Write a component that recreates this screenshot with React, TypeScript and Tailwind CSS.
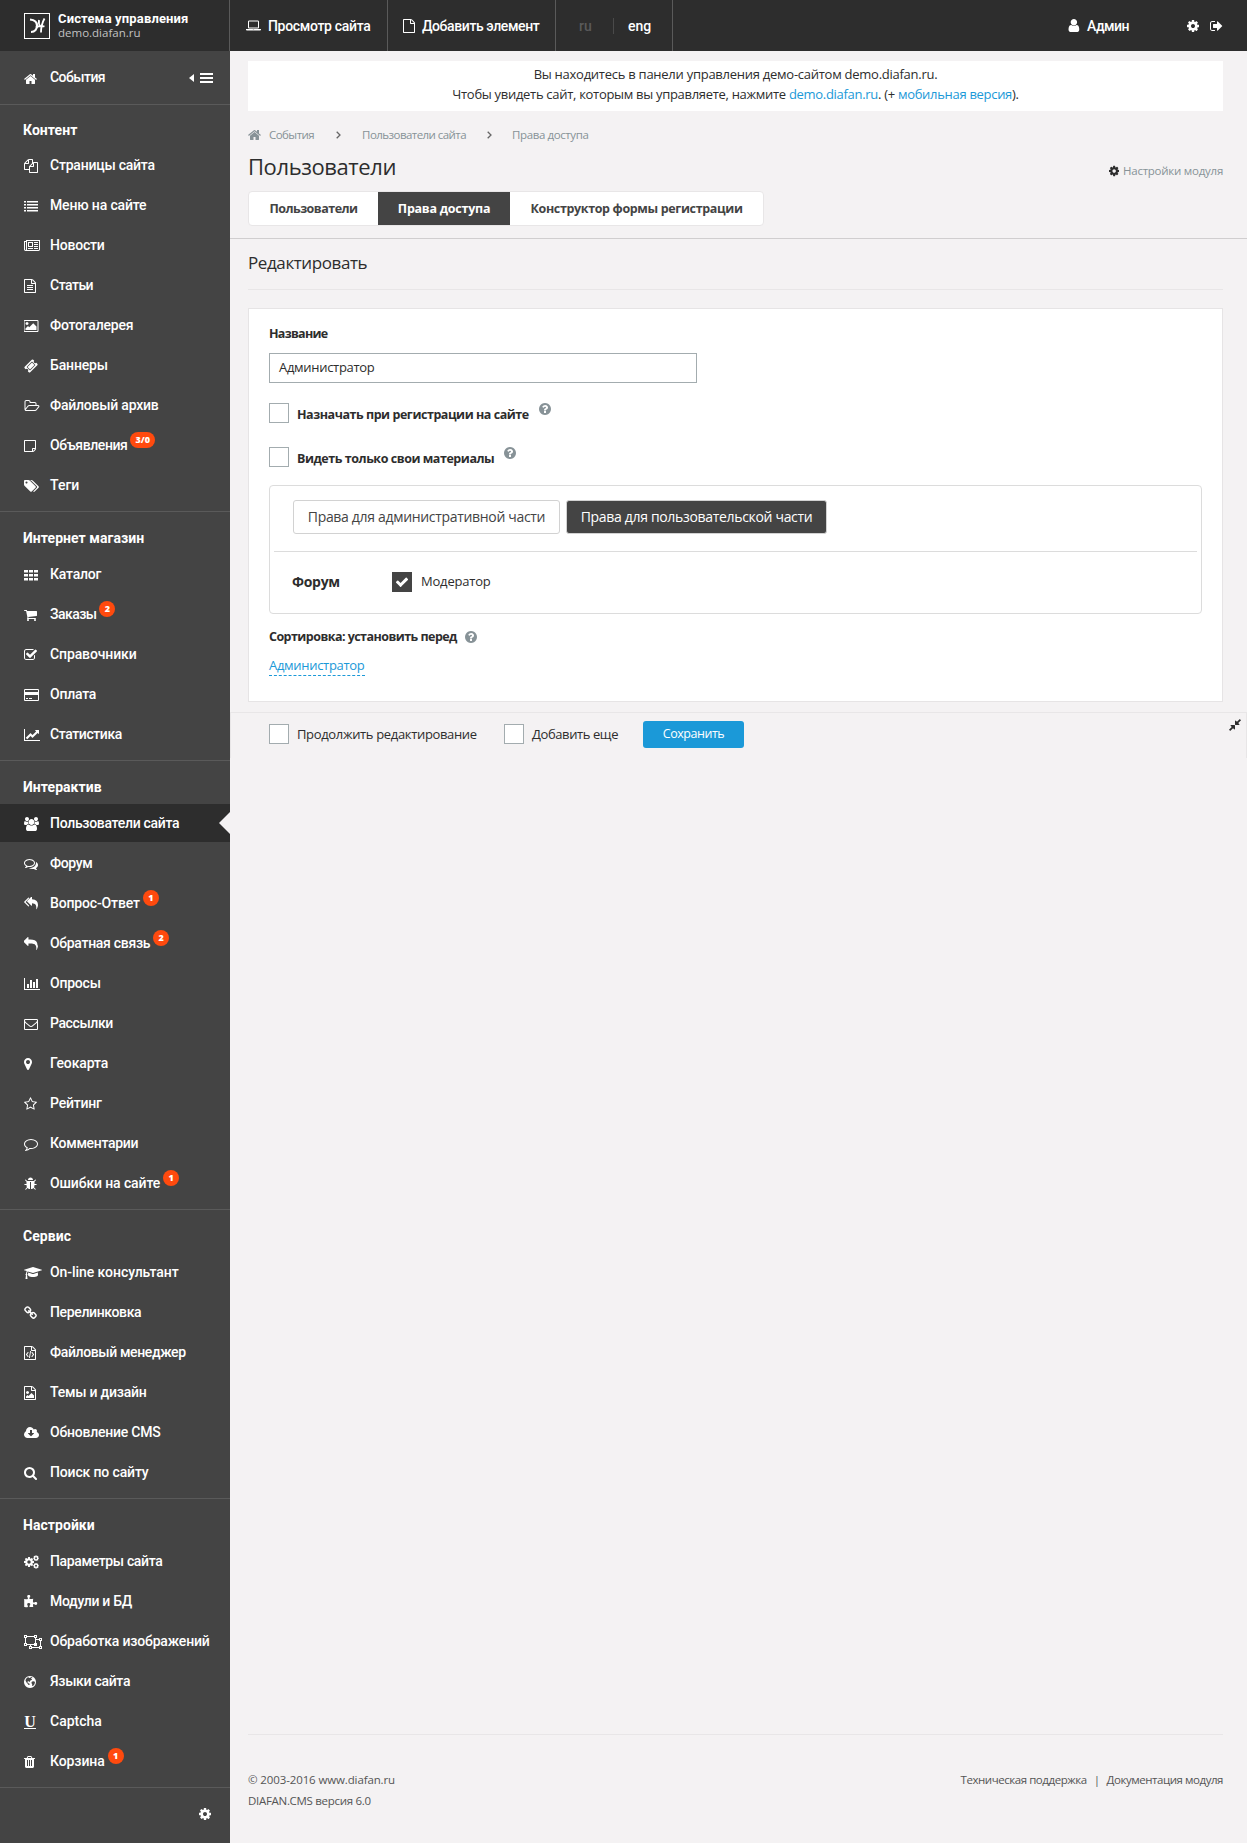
import { ReactNode } from 'react';

type IconDef = { x?: number; w?: number; d: string };

const FILE =
  'M1596 380q28 28 48 76t20 88v1152q0 40-28 68t-68 28h-1344q-40 0-68-28t-28-68v-1600q0-40 28-68t68-28h896q40 0 88 20t76 48zm-444-244v376h376q-10-29-22-41l-313-313q-12-12-41-22zm384 1528v-1024h-416q-40 0-68-28t-28-68v-416h-768v1536h1280z';
const COG =
  'M1152 896q0-106-75-181t-181-75-181 75-75 181 75 181 181 75 181-75 75-181zm512-109v222q0 12-8 23t-20 13l-185 28q-19 54-39 91 35 50 107 138 10 12 10 25t-9 23q-27 37-99 108t-94 71q-12 0-26-9l-138-108q-44 23-91 38-16 136-29 186-7 28-36 28h-222q-14 0-24.5-8.5t-11.5-21.5l-28-184q-49-16-90-37l-141 107q-10 9-25 9-14 0-25-11-126-114-165-168-7-10-7-23 0-12 8-23 15-21 51-66.5t54-70.5q-27-50-41-99l-183-27q-13-2-21-12.5t-8-23.5v-222q0-12 8-23t19-13l186-28q14-46 39-92-40-57-107-138-10-12-10-24 0-10 9-23 26-36 98.5-107.5t94.5-71.5q13 0 26 10l138 107q44-23 91-38 16-136 29-186 7-28 36-28h222q14 0 24.5 8.5t11.5 21.5l28 184q49 16 90 37l142-107q9-9 24-9 13 0 25 10 129 119 165 170 7 8 7 22 0 12-8 23-15 21-51 66.5t-54 70.5q26 50 41 98l183 28q13 2 21 12.5t8 23.5z';

const ICONS: Record<string, IconDef> = {
  home: { x: 64, w: 1664, d: 'M1472 992v480q0 26-19 45t-45 19h-384v-384h-256v384h-384q-26 0-45-19t-19-45v-480q0-1 .5-3t.5-3l575-474 575 474q1 2 1 6zm223-69l-62 74q-8 9-21 11h-3q-13 0-21-7l-692-577-692 577q-12 8-24 7-13-2-21-11l-62-74q-8-10-7-23.5t11-21.5l719-599q32-26 76-26t76 26l244 204v-195q0-14 9-23t23-9h192q14 0 23 9t9 23v408l219 182q10 8 11 21.5t-7 23.5z' },
  cog: { x: 128, w: 1536, d: COG },
  user: { x: 192, w: 1408, d: 'M1536 1399q0 109-62.5 187t-150.5 78h-854q-88 0-150.5-78t-62.5-187q0-85 8.5-160.5t31.5-152 58.5-131 94-89 134.5-34.5q131 128 313 128t313-128q76 0 134.5 34.5t94 89 58.5 131 31.5 152 8.5 160.5zm-256-887q0 159-112.5 271.5t-271.5 112.5-271.5-112.5-112.5-271.5 112.5-271.5 271.5-112.5 271.5 112.5 112.5 271.5z' },
  signOut: { x: 64, w: 1664, d: 'M704 1440q0 4 1 20t.5 26.5-3 23.5-10 19.5-20.5 6.5h-320q-119 0-203.5-84.5t-84.5-203.5v-704q0-119 84.5-203.5t203.5-84.5h320q13 0 22.5 9.5t9.5 22.5q0 4 1 20t.5 26.5-3 23.5-10 19.5-20.5 6.5h-320q-66 0-113 47t-47 113v704q0 66 47 113t113 47h312l11.5 1 11.5 3 8 5.5 7 9 2 13.5zm928-544q0 26-19 45l-544 544q-19 19-45 19t-45-19-19-45v-288h-448q-26 0-45-19t-19-45v-384q0-26 19-45t45-19h448v-288q0-26 19-45t45-19 45 19l544 544q19 19 19 45z' },
  laptop: { w: 1920, d: 'M416 1216q-66 0-113-47t-47-113v-704q0-66 47-113t113-47h1088q66 0 113 47t47 113v704q0 66-47 113t-113 47h-1088zm-32-864v704q0 13 9.5 22.5t22.5 9.5h1088q13 0 22.5-9.5t9.5-22.5v-704q0-13-9.5-22.5t-22.5-9.5h-1088q-13 0-22.5 9.5t-9.5 22.5zm1376 928h160v96q0 40-47 68t-113 28h-1600q-66 0-113-28t-47-68v-96h1760zm-720 96q16 0 16-16t-16-16h-160q-16 0-16 16t16 16h160z' },
  file: { x: 128, w: 1536, d: FILE },
  fileText: { x: 128, w: 1536, d: FILE + 'm-1024-864q0-14 9-23t23-9h704q14 0 23 9t9 23v64q0 14-9 23t-23 9h-704q-14 0-23-9t-9-23v-64zm736 224q14 0 23 9t9 23v64q0 14-9 23t-23 9h-704q-14 0-23-9t-9-23v-64q0-14 9-23t23-9h704zm0 256q14 0 23 9t9 23v64q0 14-9 23t-23 9h-704q-14 0-23-9t-9-23v-64q0-14 9-23t23-9h704z' },
  fileCode: { x: 128, w: 1536, d: FILE + 'm-928-896q8-11 21-12.5t24 6.5l51 38q11 8 12.5 21t-6.5 24l-182 243 182 243q8 11 6.5 24t-12.5 21l-51 38q-11 8-24 6.5t-21-12.5l-226-301q-14-19 0-38zm802 301q14 19 0 38l-226 301q-8 11-21 12.5t-24-6.5l-51-38q-11-8-12.5-21t6.5-24l182-243-182-243q-8-11-6.5-24t12.5-21l51-38q11-8 24-6.5t21 12.5zm-620 461q-13-2-20.5-13t-5.5-24l138-831q2-13 13-20.5t24-5.5l63 10q13 2 20.5 13t5.5 24l-138 831q-2 13-13 20.5t-24 5.5z' },
  fileImage: { x: 128, w: 1536, d: FILE + 'm-128-448v320h-1024v-192l192-192 128 128 384-384zm-832-192q-80 0-136-56t-56-136 56-136 136-56 136 56 56 136-56 136-136 56z' },
  files: { d: 'M1696 384q40 0 68 28t28 68v1216q0 40-28 68t-68 28h-960q-40 0-68-28t-28-68v-288h-544q-40 0-68-28t-28-68v-672q0-40 20-88t48-76l408-408q28-28 76-48t88-20h416q40 0 68 28t28 68v328q68-40 128-40h416zm-544 213l-299 299h299v-299zm-640-384l-299 299h299v-299zm196 647l316-316v-416h-384v416q0 40-28 68t-68 28h-416v640h512v-256q0-40 20-88t48-76zm956 804v-1152h-384v416q0 40-28 68t-68 28h-416v640h896z' },
  list: { d: 'M0 256h256v192h-256zM384 256h1408v192h-1408zM0 640h256v192h-256zM384 640h1408v192h-1408zM0 1024h256v192h-256zM384 1024h1408v192h-1408zM0 1408h256v192h-256zM384 1408h1408v192h-1408z' },
  news: { w: 2048, d: 'M1024 512h-384v384h384zm128 640v128h-640v-128zm0-768v640h-640v-640zm640 768v128h-512v-128zm0-256v128h-512v-128zm0-256v128h-512v-128zm0-256v128h-512v-128zm-1536 960v-960h-128v960q0 26 19 45t45 19 45-19 19-45zm1664 0v-1088h-1536v1088q0 33-11 64h1483q26 0 45-19t19-45zm128-1216v1216q0 80-56 136t-136 56h-1664q-80 0-136-56t-56-136v-1088h256v-128z' },
  picture: { w: 1920, d: 'M576 576q0 80-56 136t-136 56-136-56-56-136 56-136 136-56 136 56 56 136zm1024 384v448h-1408v-192l320-320 160 160 512-512zm96-704h-1600q-13 0-22.5 9.5t-9.5 22.5v1216q0 13 9.5 22.5t22.5 9.5h1600q13 0 22.5-9.5t9.5-22.5v-1216q0-13-9.5-22.5t-22.5-9.5zm160 32v1216q0 66-47 113t-113 47h-1600q-66 0-113-47t-47-113v-1216q0-66 47-113t113-47h1600q66 0 113 47t47 113z' },
  ticket: { d: 'M1024 452l316 316-572 572-316-316zm-211 979l618-618q19-19 19-45t-19-45l-362-362q-18-18-45-18t-45 18l-618 618q-19 19-19 45t19 45l362 362q18 18 45 18t45-18zm889-637l-907 908q-37 37-90.5 37t-90.5-37l-126-126q56-56 56-136t-56-136-136-56-136 56l-125-126q-37-37-37-90.5t37-90.5l907-906q37-37 90.5-37t90.5 37l125 125q-56 56-56 136t56 136 136 56 136-56l126 125q37 37 37 90.5t-37 90.5z' },
  folder: { w: 1984, d: 'M1845 931q0-35-53-35h-1088q-40 0-85.5 21.5t-71.5 52.5l-294 363q-18 24-18 40 0 35 53 35h1088q40 0 86-22t71-53l294-363q18-22 18-39zm-1141-163h768v-160q0-40-28-68t-68-28h-576q-40 0-68-28t-28-68v-64q0-40-28-68t-68-28h-320q-40 0-68 28t-28 68v853l256-315q44-53 116-87.5t140-34.5zm1269 163q0 62-46 120l-295 363q-43 53-116 87.5t-140 34.5h-1088q-92 0-158-66t-66-158v-960q0-92 66-158t158-66h320q92 0 158 66t66 158v32h544q92 0 158 66t66 158v160h192q54 0 99 24.5t67 70.5q15 32 15 68z' },
  note: { w: 1536, d: 'M1400 1280h-248v248q29-10 41-22l185-185q12-12 22-41zm-280-128h288v-896h-1280v1280h896v-288q0-40 28-68t68-28zm416-928v1024q0 40-20 88t-48 76l-184 184q-28 28-76 48t-88 20h-1024q-40 0-68-28t-28-68v-1344q0-40 28-68t68-28h1344q40 0 68 28t28 68z' },
  tags: { w: 1920, d: 'M448 448q0-53-37.5-90.5t-90.5-37.5-90.5 37.5-37.5 90.5 37.5 90.5 90.5 37.5 90.5-37.5 37.5-90.5zm1067 576q0 53-37 90l-491 492q-39 37-91 37-53 0-90-37l-715-716q-38-37-64.5-101t-26.5-117v-416q0-52 38-90t90-38h416q53 0 117 26.5t102 64.5l715 714q37 39 37 91zm384 0q0 53-37 90l-491 492q-39 37-91 37-36 0-59-14t-53-45l470-470q37-37 37-90 0-52-37-91l-715-714q-38-38-102-64.5t-117-26.5h224q53 0 117 26.5t102 64.5l715 714q37 39 37 91z' },
  th: { d: 'M0 256h512v320h-512zM640 256h512v320h-512zM1280 256h512v320h-512zM0 768h512v320h-512zM640 768h512v320h-512zM1280 768h512v320h-512zM0 1280h512v320h-512zM640 1280h512v320h-512zM1280 1280h512v320h-512z' },
  cart: { x: 64, w: 1664, d: 'M704 1536q0 52-38 90t-90 38-90-38-38-90 38-90 90-38 90 38 38 90zm896 0q0 52-38 90t-90 38-90-38-38-90 38-90 90-38 90 38 38 90zm128-1088v512q0 24-16.5 42.5t-40.5 21.5l-1044 122q13 60 13 70 0 16-24 64h920q26 0 45 19t19 45-19 45-45 19h-1024q-26 0-45-19t-19-45q0-11 8-31.5t16-36 21.5-40 15.5-29.5l-177-823h-204q-26 0-45-19t-19-45 19-45 45-19h256q16 0 28.5 6.5t19.5 15.5 13 24.5 8 26 5.5 29.5 4.5 26h1201q26 0 45 19t19 45z' },
  checkSquare: { x: 64, w: 1664, d: 'M1472 930v318q0 119-84.5 203.5t-203.5 84.5h-832q-119 0-203.5-84.5t-84.5-203.5v-832q0-119 84.5-203.5t203.5-84.5h832q63 0 117 25 15 7 18 23 3 17-9 29l-49 49q-10 10-23 10-3 0-9-2-23-6-45-6h-832q-66 0-113 47t-47 113v832q0 66 47 113t113 47h832q66 0 113-47t47-113v-254q0-13 9-22l64-64q10-10 23-10 6 0 12 3 20 8 20 29zm231-489l-814 814q-24 24-57 24t-57-24l-430-430q-24-24-24-57t24-57l110-110q24-24 57-24t57 24l263 263 647-647q24-24 57-24t57 24l110 110q24 24 24 57t-24 57z' },
  card: { w: 1920, d: 'M1760 128q66 0 113 47t47 113v1216q0 66-47 113t-113 47h-1600q-66 0-113-47t-47-113v-1216q0-66 47-113t113-47zM128 256v256h1664v-256zM128 896v640h1664v-640zM256 1408v-128h256v128zM640 1408v-128h384v128z' },
  lineChart: { w: 2048, d: 'M2048 1536v128h-2048v-1536h128v1408h1920zm-128-1248v435q0 21-19.5 29.5t-35.5-7.5l-121-121-633 633q-10 10-23 10t-23-10l-233-233-416 416-192-192 585-585q10-10 23-10t23 10l233 233 464-464-121-121q-16-16-7.5-35.5t29.5-19.5h435q14 0 23 9t9 23z' },
  users: { w: 1920, d: 'M593 896q-162 5-265 128h-134q-82 0-138-40.5t-56-118.5q0-353 124-353 6 0 43.5 21t97.5 42.5 119 21.5q67 0 133-23-5 37-5 66 0 139 81 256zm1071 637q0 120-73 189.5t-194 69.5h-874q-121 0-194-69.5t-73-189.5q0-53 3.5-103.5t14-109 26.5-108.5 43-97.5 62-81 85.5-53.5 111.5-20q10 0 43 21.5t73 48 107 48 135 21.5 135-21.5 107-48 73-48 43-21.5q61 0 111.5 20t85.5 53.5 62 81 43 97.5 26.5 108.5 14 109 3.5 103.5zm-1024-1277q0 106-75 181t-181 75-181-75-75-181 75-181 181-75 181 75 75 181zm704 384q0 159-112.5 271.5t-271.5 112.5-271.5-112.5-112.5-271.5 112.5-271.5 271.5-112.5 271.5 112.5 112.5 271.5zm576 225q0 78-56 118.5t-138 40.5h-134q-103-123-265-128 81-117 81-256 0-29-5-66 66 23 133 23 59 0 119-21.5t97.5-42.5 43.5-21q124 0 124 353zm-128-609q0 106-75 181t-181 75-181-75-75-181 75-181 181-75 181 75 75 181z' },
  comments: { d: 'M704 384q-153 0-286 52t-211.5 141-78.5 191q0 82 53 158t149 132l97 56-35 84q34-20 62-39l44-31 53 10q78 14 153 14 153 0 286-52t211.5-141 78.5-191-78.5-191-211.5-141-286-52zm0-128q191 0 353.5 68.5t256.5 186.5 94 257-94 257-256.5 186.5-353.5 68.5q-86 0-176-16-124 88-278 128-36 9-86 16h-3q-11 0-20.5-8t-11.5-21q-1-3-1-6.5t.5-6.5 2-6l2.5-5 3.5-5.5 4-5 4.5-5 4-4.5q5-6 23-25t26-29.5 22.5-29 25-38.5 20.5-44q-124-72-195-177t-71-224q0-139 94-257t256.5-186.5 353.5-68.5zm822 1169q10 24 20.5 44t25 38.5 22.5 29 26 29.5 23 25q1 1 4 4.5t4.5 5 4 5 3.5 5.5l2.5 5 2 6 .5 6.5-1 6.5q-3 14-13 22t-22 7q-50-7-86-16-154-40-278-128-90 16-176 16-271 0-472-132 58 4 88 4 161 0 309-45t264-129q125-92 192-212t67-254q0-77-23-152 129 71 204 178t75 230q0 120-71 224.5t-195 176.5z' },
  replyAll: { d: 'M640 1082v70q0 42-39 59-13 5-25 5-27 0-45-19l-512-512q-19-19-19-45t19-45l512-512q29-31 70-14 39 17 39 59v69l-397 398q-19 19-19 45t19 45zm1152-58q0 58-17 133.5t-38.5 138-48 125-40.5 90.5l-20 40q-8 17-28 17-6 0-9-1-25-8-23-34 43-400-106-565-64-71-170.5-110.5t-267.5-52.5v251q0 42-39 59-13 5-25 5-27 0-45-19l-512-512q-19-19-19-45t19-45l512-512q29-31 70-14 39 17 39 59v262q411 28 599 221 169 173 169 509z' },
  reply: { d: 'M1792 1120q0 166-127 451-3 7-10.5 24t-13.5 30-13 22q-12 17-28 17-15 0-23.5-10t-8.5-25q0-9 2.5-26.5t2.5-23.5q5-68 5-123 0-112-19.5-200.5t-54-153.5-89-112-117-79-145.5-48.5-167-27-190.5-6.5h-224v256q0 26-19 45t-45 19-45-19l-512-512q-19-19-19-45t19-45l512-512q19-19 45-19t45 19 19 45v256h224q713 0 875 403 53 134 53 333z' },
  barChart: { w: 2048, d: 'M640 896v512h-256v-512zM1024 384v1024h-256v-1024zM2048 1536v128h-2048v-1536h128v1408zM1408 640v768h-256v-768zM1792 256v1152h-256v-1152z' },
  envelope: { d: 'M1664 1504v-768q-32 36-69 66-268 206-426 338-51 43-83 67t-86.5 48.5-102.5 24.5h-2q-48 0-102.5-24.5t-86.5-48.5-83-67q-158-132-426-338-37-30-69-66v768q0 13 9.5 22.5t22.5 9.5h1472q13 0 22.5-9.5t9.5-22.5zm0-1051v-24.5l-.5-13-3-12.5-5.5-9-9-7.5-14-2.5h-1472q-13 0-22.5 9.5t-9.5 22.5q0 168 147 284 193 152 401 317 6 5 35 29.5t46 37.5 44.5 31.5 50.5 27.5 43 9h2q20 0 43-9t50.5-27.5 44.5-31.5 46-37.5 35-29.5q208-165 401-317 54-43 100.5-115.5t46.5-131.5zm128-37v1088q0 66-47 113t-113 47h-1472q-66 0-113-47t-47-113v-1088q0-66 47-113t113-47h1472q66 0 113 47t47 113z' },
  marker: { x: 384, w: 1024, d: 'M1152 640q0-106-75-181t-181-75-181 75-75 181 75 181 181 75 181-75 75-181zm256 0q0 109-33 179l-364 774q-16 33-47.5 52t-67.5 19-67.5-19-46.5-52l-365-774q-33-70-33-179 0-212 150-362t362-150 362 150 150 362z' },
  star: { x: 64, w: 1664, d: 'M1201 1004l306-297-422-62-189-382-189 382-422 62 306 297-73 421 378-199 377 199zm527-357q0 22-26 48l-363 354 86 500q1 7 1 20 0 50-41 50-19 0-40-12l-449-236-449 236q-22 12-40 12-21 0-31.5-14.5t-10.5-35.5q0-6 2-20l86-500-364-354q-25-27-25-48 0-37 56-46l502-73 225-455q19-41 49-41t49 41l225 455 502 73q56 9 56 46z' },
  comment: { d: 'M896 384q-204 0-381.5 69.5t-282 187.5-104.5 255q0 112 71.5 213.5t201.5 175.5l87 50-27 96q-24 91-70 172 152-63 275-171l43-38 57 6q69 8 130 8 204 0 381.5-69.5t282-187.5 104.5-255-104.5-255-282-187.5-381.5-69.5zm896 512q0 174-120 321.5t-326 233-450 85.5q-70 0-145-8-198 175-460 242-49 14-114 22h-5q-15 0-27-10.5t-16-27.5v-1q-3-4-.5-12t2-10 4.5-9.5l6-9 7-8.5 8-9q7-8 31-34.5t34.5-38 31-39.5 32.5-51 27-59 26-76q-157-89-247.5-220t-90.5-281q0-130 71-248.5t191-204.5 286-136.5 348-50.5 348 50.5 286 136.5 191 204.5 71 248.5z' },
  bug: { x: 64, w: 1664, d: 'M1696 960q0 26-19 45t-45 19h-224q0 171-67 290l208 209q19 19 19 45t-19 45q-18 19-45 19t-45-19l-198-197q-5 5-15 13t-42 28.5-65 36.5-82 29-97 13v-896h-128v896q-51 0-101.5-13.5t-87-33-66-39-43.5-32.5l-15-14-183 207q-20 21-48 21-24 0-43-16-19-18-20.5-44.5t15.5-46.5l202-227q-58-114-58-274h-224q-26 0-45-19t-19-45 19-45 45-19h224v-294l-173-173q-19-19-19-45t19-45 45-19 45 19l173 173h844l173-173q19-19 45-19t45 19 19 45-19 45l-173 173v294h224q26 0 45 19t19 45zm-480-576h-640q0-133 93.5-226.5t226.5-93.5 226.5 93.5 93.5 226.5z' },
  cap: { w: 2304, d: 'M1774 836l18 316q4 69-82 128t-235 93.5-323 34.5-323-34.5-235-93.5-82-128l18-316 574 181q22 7 48 7t48-7zm530-324q0 23-22 31l-1120 352q-4 1-10 1t-10-1l-652-206q-43 34-71 111.5t-34 178.5q63 36 63 109 0 69-58 107l58 433q2 14-8 25-9 11-24 11h-192q-15 0-24-11-10-11-8-25l58-433q-58-38-58-107 0-73 65-111 11-207 98-330l-333-104q-22-8-22-31t22-31l1120-352q4-1 10-1t10 1l1120 352q22 8 22 31z' },
  link: { x: 64, w: 1664, d: 'M1520 1216q0-40-28-68l-208-208q-28-28-68-28-42 0-72 32 3 3 19 18.5t21.5 21.5 15 19 13 25.5 3.5 27.5q0 40-28 68t-68 28q-15 0-27.5-3.5t-25.5-13-19-15-21.5-21.5-18.5-19q-33 31-33 73 0 40 28 68l206 207q27 27 68 27 40 0 68-26l147-146q28-28 28-67zm-703-705q0-40-28-68l-206-207q-28-28-68-28-39 0-68 27l-147 146q-28 28-28 67 0 40 28 68l208 208q27 27 68 27 42 0 72-31-3-3-19-18.5t-21.5-21.5-15-19-13-25.5-3.5-27.5q0-40 28-68t68-28q15 0 27.5 3.5t25.5 13 19 15 21.5 21.5 18.5 19q33-31 33-73zm895 705q0 120-85 203l-147 146q-83 83-203 83-121 0-204-85l-206-207q-83-83-83-203 0-123 88-209l-88-88q-86 88-208 88-120 0-204-84l-208-208q-84-84-84-204t85-203l147-146q83-83 203-83 121 0 204 85l206 207q83 83 83 203 0 123-88 209l88 88q86-88 208-88 120 0 204 84l208 208q84 84 84 204z' },
  cloud: { w: 1920, d: 'M1280 928q0-14-9-23t-23-9h-224v-352q0-13-9.5-22.5t-22.5-9.5h-192q-13 0-22.5 9.5t-9.5 22.5v352h-224q-13 0-22.5 9.5t-9.5 22.5q0 14 9 23l352 352q9 9 23 9t23-9l351-351q10-12 10-24zm640 224q0 159-112.5 271.5t-271.5 112.5h-1088q-185 0-316.5-131.5t-131.5-316.5q0-130 70-240t188-165q-2-30-2-43 0-212 150-362t362-150q156 0 285.5 87t188.5 231q71-62 166-62 106 0 181 75t75 181q0 76-41 138 130 31 213.5 135.5t83.5 238.5z' },
  search: { x: 64, w: 1664, d: 'M1216 832q0-185-131.5-316.5t-316.5-131.5-316.5 131.5-131.5 316.5 131.5 316.5 316.5 131.5 316.5-131.5 131.5-316.5zm512 832q0 52-38 90t-90 38q-54 0-90-38l-343-342q-179 124-399 124-143 0-273.5-55.5t-225-150-150-225-55.5-273.5 55.5-273.5 150-225 225-150 273.5-55.5 273.5 55.5 225 150 150 225 55.5 273.5q0 220-124 399l343 343q37 37 37 90z' },
  puzzle: { x: 64, w: 1728, d: 'M1755 1083q0 81-44.5 135t-123.5 54q-41 0-77.5-17.5t-59-38-56.5-38-71-17.5q-110 0-110 124 0 39 16 115t15 115v5q-22 0-33 1-34 3-97.5 11.5t-115.5 13.5-98 5q-61 0-103-26.5t-42-83.5q0-37 17.5-71t38-56.5 38-59 17.5-77.5q0-79-54-123.5t-135-44.5q-84 0-143 45.5t-59 127.5q0 43 15 83t33.5 64.5 33.5 53 15 50.5q0 45-46 89-37 35-117 35-95 0-245-24-9-2-27.5-4t-27.5-4l-13-2q-1 0-3-1-2 0-2-1v-1024q2 1 17.5 3.5t34 5 21.5 3.5q150 24 245 24 80 0 117-35 46-44 46-89 0-22-15-50.5t-33.5-53-33.5-64.5-15-83q0-82 59-127.5t144-45.5q80 0 134 44.5t54 123.5q0 41-17.5 77.5t-38 59-38 56.5-17.5 71q0 57 42 83.5t103 26.5q64 0 180-15t163-17v2q-1 2-3.5 17.5t-5 34-3.5 21.5q-24 150-24 245 0 80 35 117 44 46 89 46 22 0 50.5-15t53-33.5 64.5-33.5 83-15q82 0 127.5 59t45.5 143z' },
  group: { w: 2304, d: 'M2304 768h-128v640h128v384h-384v-128h-896v128h-384v-384h128v-128h-384v128h-384v-384h128v-640h-128v-384h384v128h896v-128h384v384h-128v128h384v-128h384zM2048 512v128h128v-128zM1408 128v128h128v-128zM128 128v128h128v-128zM256 1280v-128h-128v128zM1280 1152v-128h128v-640h-128v-128h-896v128h-128v640h128v128zM896 1664v-128h-128v128zM2176 1664v-128h-128v128zM2048 1408v-640h-128v-128h-384v384h128v384h-384v-128h-384v128h128v128h896v-128z' },
  globe: { x: 128, w: 1536, d: 'M896 128a768 768 0 1 0 .1 0zM1050 250l130 60 20 90-120-20-60 110 150 40-70 110-150 60-90 130 60 110-90-40-80-100-170 30-20 130 110 20 60 110 130 30-40 150-110 10-110-160-170-190-110-230 60-190 180-190 150-20 70 80 140-20zM1280 800l190 20 60 110-60 240-190 240-120-30 20-190-110-180 60-150z' },
  trash: { x: 192, w: 1408, d: 'M704 1376v-704q0-14-9-23t-23-9h-64q-14 0-23 9t-9 23v704q0 14 9 23t23 9h64q14 0 23-9t9-23zm256 0v-704q0-14-9-23t-23-9h-64q-14 0-23 9t-9 23v704q0 14 9 23t23 9h64q14 0 23-9t9-23zm256 0v-704q0-14-9-23t-23-9h-64q-14 0-23 9t-9 23v704q0 14 9 23t23 9h64q14 0 23-9t9-23zm-544-992h448l-48-117q-7-9-17-11h-317q-10 2-17 11zm928 32v64q0 14-9 23t-23 9h-96v948q0 83-47 143.5t-113 60.5h-832q-66 0-113-58.5t-47-141.5v-952h-96q-14 0-23-9t-9-23v-64q0-14 9-23t23-9h309l70-167q15-37 54-63t79-26h320q40 0 79 26t54 63l70 167h309q14 0 23 9t9 23z' },
  help: { x: 128, w: 1536, d: 'M1024 1376v-192q0-14-9-23t-23-9h-192q-14 0-23 9t-9 23v192q0 14 9 23t23 9h192q14 0 23-9t9-23zm256-672q0-88-55.5-163t-138.5-116-170-41q-243 0-371 213-15 24 8 42l132 100q7 6 19 6 16 0 25-12 53-68 86-92 34-24 86-24 48 0 85.5 26t37.5 59q0 38-20 61t-68 45q-63 28-115.5 86.5t-52.5 125.5v36q0 14 9 23t23 9h192q14 0 23-9t9-23q0-19 21.5-49.5t54.5-49.5q32-18 49-28.5t46-35 44.5-48 28-60.5 12.5-81zm384 192q0 209-103 385.5t-279.5 279.5-385.5 103-385.5-103-279.5-279.5-103-385.5 103-385.5 279.5-279.5 385.5-103 385.5 103 279.5 279.5 103 385.5z' },
  compress: { x: 128, w: 1536, d: 'M896 960v448q0 26-19 45t-45 19-45-19l-144-144-332 332q-10 10-23 10t-23-10l-114-114q-10-10-10-23t10-23l332-332-144-144q-19-19-19-45t19-45 45-19h448q26 0 45 19t19 45zm755-672q0 13-10 23l-332 332 144 144q19 19 19 45t-19 45-45 19h-448q-26 0-45-19t-19-45v-448q0-26 19-45t45-19 45 19l144 144 332-332q10-10 23-10t23 10l114 114q10 10 10 23z' },
  check: { d: 'M1671 566q0 40-28 68l-724 724-136 136q-28 28-68 28t-68-28l-136-136-362-362q-28-28-28-68t28-68l136-136q28-28 68-28t68 28l294 295 656-657q28-28 68-28t68 28l136 136q28 28 28 68z' },
};

function Icon({ name, size = 14, className = '' }: { name: string; size?: number; className?: string }) {
  if (name === 'cogs') {
    return (
      <svg width="15" height="14" viewBox="0 0 1920 1792" fill="currentColor" fillRule="evenodd" className={className}>
        <path d={COG} transform="translate(-107 149) scale(.833)" />
        <path d={COG} transform="translate(1110 -20) scale(.48)" />
        <path d={COG} transform="translate(1110 950) scale(.48)" />
      </svg>
    );
  }
  if (name === 'underline') {
    return (
      <span className="block h-[13px] w-3 border-b border-white text-center font-['Liberation_Serif',serif] text-[16px] leading-3 font-bold">
        U
      </span>
    );
  }
  const { x = 0, w = 1792, d } = ICONS[name];
  return (
    <svg
      width={(w / 1792) * size}
      height={size}
      viewBox={`${x} 0 ${w} 1792`}
      fill="currentColor"
      fillRule="evenodd"
      className={className}
    >
      <path d={d} />
    </svg>
  );
}

type Item = { icon: string; label: string; badge?: string; active?: boolean; track?: string };
type Section = { title: string; items: Item[] };

const SECTIONS: Section[] = [
  {
    title: 'Контент',
    items: [
      { icon: 'files', label: 'Страницы сайта' },
      { icon: 'list', label: 'Меню на сайте', track: 'tracking-[-0.15px]' },
      { icon: 'news', label: 'Новости' },
      { icon: 'fileText', label: 'Статьи', track: 'tracking-[-0.5px]' },
      { icon: 'picture', label: 'Фотогалерея' },
      { icon: 'ticket', label: 'Баннеры', track: 'tracking-[-0.15px]' },
      { icon: 'folder', label: 'Файловый архив' },
      { icon: 'note', label: 'Объявления', badge: '3/0', track: 'tracking-[-0.4px]' },
      { icon: 'tags', label: 'Теги', track: 'tracking-normal' },
    ],
  },
  {
    title: 'Интернет магазин',
    items: [
      { icon: 'th', label: 'Каталог' },
      { icon: 'cart', label: 'Заказы', badge: '2', track: 'tracking-[-0.55px]' },
      { icon: 'checkSquare', label: 'Справочники', track: 'tracking-[-0.12px]' },
      { icon: 'card', label: 'Оплата' },
      { icon: 'lineChart', label: 'Статистика', track: 'tracking-[-0.4px]' },
    ],
  },
  {
    title: 'Интерактив',
    items: [
      { icon: 'users', label: 'Пользователи сайта', active: true, track: 'tracking-[-0.3px]' },
      { icon: 'comments', label: 'Форум', track: 'tracking-[-0.4px]' },
      { icon: 'replyAll', label: 'Вопрос-Ответ', badge: '1', track: 'tracking-[-0.15px]' },
      { icon: 'reply', label: 'Обратная связь', badge: '2', track: 'tracking-[-0.3px]' },
      { icon: 'barChart', label: 'Опросы' },
      { icon: 'envelope', label: 'Рассылки', track: 'tracking-[-0.4px]' },
      { icon: 'marker', label: 'Геокарта', track: 'tracking-[-0.12px]' },
      { icon: 'star', label: 'Рейтинг' },
      { icon: 'comment', label: 'Комментарии', track: 'tracking-[-0.3px]' },
      { icon: 'bug', label: 'Ошибки на сайте', badge: '1', track: 'tracking-[-0.12px]' },
    ],
  },
  {
    title: 'Сервис',
    items: [
      { icon: 'cap', label: 'On-line консультант', track: 'tracking-[-0.06px]' },
      { icon: 'link', label: 'Перелинковка', track: 'tracking-[-0.35px]' },
      { icon: 'fileCode', label: 'Файловый менеджер', track: 'tracking-[-0.38px]' },
      { icon: 'fileImage', label: 'Темы и дизайн' },
      { icon: 'cloud', label: 'Обновление CMS' },
      { icon: 'search', label: 'Поиск по сайту', track: 'tracking-[-0.15px]' },
    ],
  },
  {
    title: 'Настройки',
    items: [
      { icon: 'cogs', label: 'Параметры сайта', track: 'tracking-[-0.35px]' },
      { icon: 'puzzle', label: 'Модули и БД', track: 'tracking-[-0.3px]' },
      { icon: 'group', label: 'Обработка изображений', track: 'tracking-[-0.17px]' },
      { icon: 'globe', label: 'Языки сайта', track: 'tracking-[-0.3px]' },
      { icon: 'underline', label: 'Captcha', track: 'tracking-normal' },
      { icon: 'trash', label: 'Корзина', badge: '1', track: 'tracking-[-0.1px]' },
    ],
  },
];

function MenuItem({ icon, label, badge, active, track = 'tracking-[-0.22px]' }: Item) {
  return (
    <a
      href="#"
      className={`relative mb-0.5 flex h-[38px] items-center pl-6 ${active ? 'bg-[#2d2d2d]' : ''}`}
    >
      <span className="w-[26px] shrink-0 pt-0.5">
        <Icon name={icon} />
      </span>
      <span className={`whitespace-nowrap ${track}`}>{label}</span>
      {badge && (
        <span className="mb-2.5 ml-[3px] flex h-4 min-w-4 items-center justify-center rounded-full bg-[#ff4a0e] px-[5px] font-['Open_Sans',sans-serif] text-[9px] font-extrabold">
          {badge}
        </span>
      )}
      {active && (
        <svg width="11" height="22" viewBox="0 0 11 22" className="absolute top-2 right-0">
          <path d="M11 0v22L0 11z" fill="#f4f2f3" />
        </svg>
      )}
    </a>
  );
}

function Sidebar() {
  return (
    <aside className="w-[230px] shrink-0 bg-[#444] font-['Roboto',sans-serif] text-sm font-medium tracking-normal text-white">
      <div className="flex h-[53px] items-center pr-[17px] pl-6">
        <span className="w-[26px] pt-0.5">
          <Icon name="home" />
        </span>
        <span className="pb-px tracking-[-0.55px]">События</span>
        <svg width="24" height="12" viewBox="0 0 24 12" fill="#fff" className="ml-auto">
          <path d="M5 2v8L0 6zM11 1h13v2H11zM11 5h13v2H11zM11 9h13v2H11z" />
        </svg>
      </div>
      {SECTIONS.map((section, i) => (
        <div key={section.title} className="border-t border-[#5a5a5a] pb-[5px]">
          <h3 className={`flex items-center pt-2 pl-[23px] font-bold tracking-[0.05px] ${i === 0 ? 'h-[41px]' : 'h-[43px]'}`}>
            {section.title}
          </h3>
          {section.items.map((item) => (
            <MenuItem key={item.label} {...item} />
          ))}
        </div>
      ))}
      <div className="flex h-[55px] items-center justify-end border-t border-[#5a5a5a] pr-[19px] pb-0.5">
        <Icon name="cog" />
      </div>
    </aside>
  );
}

function Header() {
  return (
    <header className="flex h-[51px] bg-[#2d2d2d] font-['Roboto',sans-serif] text-sm font-medium tracking-normal text-white">
      <div className="flex w-[230px] items-center border-r border-[#5a5a5a] pl-6">
        <svg width="26" height="26" viewBox="0 0 26 26" fill="none" stroke="#fff">
          <rect x=".5" y=".5" width="25" height="25" />
          <path d="M6 6.500C11 7 13 9 13 12.500S11 19 7 19" strokeWidth="2.200" />
          <path d="M15 7c-.5 3 0 5 1.500 6.500M20.500 5.500c-2.500 4.500-3.500 9-3.500 14M12 14.500c3-2 5-2 8.500-1" strokeWidth="1.800" />
        </svg>
        <div className="ml-2">
          <div className="text-[13px] leading-[15px] font-bold tracking-[0.15px]">Система управления</div>
          <div className="font-['Open_Sans',sans-serif] text-[11.500px] leading-[14px] font-normal text-[#c2c2c2]">demo.diafan.ru</div>
        </div>
      </div>
      <a href="#" className="flex w-[158px] items-center border-r border-[#5a5a5a] pl-4">
        <Icon name="laptop" />
        <span className="ml-[7px] tracking-[-0.32px]">Просмотр сайта</span>
      </a>
      <a href="#" className="flex w-[168px] items-center border-r border-[#5a5a5a] pl-[15px]">
        <Icon name="file" />
        <span className="ml-[7px] tracking-[-0.4px]">Добавить элемент</span>
      </a>
      <div className="flex w-[117px] items-center border-r border-[#5a5a5a] pl-[23px]">
        <span className="w-[34px] text-[#5a5a5a]">ru</span>
        <span className="h-4 border-l border-[#4a4a4a] pl-3.5 leading-4">eng</span>
      </div>
      <div className="ml-auto flex items-center pr-6">
        <Icon name="user" size={15} />
        <span className="mr-[58px] ml-[7px] tracking-[-0.5px]">Админ</span>
        <Icon name="cog" />
        <Icon name="signOut" className="ml-[11px]" />
      </div>
    </header>
  );
}

function Checkbox({ checked }: { checked?: boolean }) {
  return checked ? (
    <span className="flex size-5 shrink-0 items-center justify-center bg-[#444] text-white">
      <Icon name="check" />
    </span>
  ) : (
    <span className="size-5 shrink-0 border border-[#a3acaf] bg-white" />
  );
}

function CheckRow({ children, className }: { children: ReactNode; className: string }) {
  return (
    <div className={`flex h-5 ${className}`}>
      <Checkbox />
      <span className="mr-2.5 ml-2 pt-0.5 text-[12.500px] leading-5 font-bold tracking-[-0.45px]">{children}</span>
      <Icon name="help" className="-mt-px text-[#879297]" />
    </div>
  );
}

function Chevron({ className }: { className: string }) {
  return (
    <svg width="5" height="8" viewBox="0 0 5 8" fill="none" stroke="#666" strokeWidth="1.300" className={className}>
      <path d="M.7.700 4 4 .7 7.300" />
    </svg>
  );
}

export default function App() {
  return (
    <div className="flex h-[1843px] w-[1247px] flex-col overflow-hidden bg-[#f4f2f3] font-['Open_Sans',sans-serif] text-[13px] tracking-[-0.3px] text-[#2d2d2d]">
      <Header />
      <div className="flex flex-1">
        <Sidebar />
        <main className="flex flex-1 flex-col">
          <div className="mt-2.5 mr-6 ml-[18px] h-[50px] bg-white pt-[3px] text-center leading-5">
            <p className="tracking-[-0.26px]">Вы находитесь в панели управления демо-сайтом demo.diafan.ru.</p>
            <p className="tracking-[-0.3px]">
              Чтобы увидеть сайт, которым вы управляете, нажмите{' '}
              <a href="#" className="text-[#1b99d8]">demo.diafan.ru</a>. (+{' '}
              <a href="#" className="text-[#1b99d8]">мобильная версия</a>).
            </p>
          </div>

          {/* Breadcrumbs */}
          <nav className="mt-4 flex h-4 items-center pl-[18px] text-[11.500px] tracking-[-0.55px] text-[#879297]">
            <Icon name="home" />
            <span className="ml-2">События</span>
            <Chevron className="mr-[21px] ml-[22px]" />
            <span>Пользователи сайта</span>
            <Chevron className="mr-5 ml-[21px]" />
            <span className="tracking-[-0.4px]">Права доступа</span>
          </nav>

          <div className="mt-2 flex h-8 items-center justify-between pr-6 pl-[18px]">
            <h1 className="pb-0.5 text-[22px] tracking-[-0.4px]">Пользователи</h1>
            <a href="#" className="flex items-center gap-1 pt-2 text-[11.500px] tracking-[-0.25px] text-[#879297]">
              <Icon name="cog" size={12} className="text-[#2d2d2d]" />
              Настройки модуля
            </a>
          </div>

          {/* Tabs */}
          <div className="border-b border-[#d0cecf] pt-2 pb-3 pl-[18px]">
            <div className="flex h-[35px] w-[516px] overflow-hidden rounded border border-[#e8e6e7] bg-white text-[12.500px] font-bold text-[#444]">
              <a href="#" className="flex w-[129px] items-center justify-center pt-0.5 tracking-[-0.5px]">Пользователи</a>
              <a href="#" className="flex w-[132px] items-center justify-center bg-[#444] pt-0.5 tracking-[-0.25px] text-white">Права доступа</a>
              <a href="#" className="flex flex-1 items-center justify-center pt-0.5 tracking-[-0.35px]">Конструктор формы регистрации</a>
            </div>
          </div>

          <h2 className="mr-6 ml-[18px] h-[51px] border-b border-[#e8e6e7] pt-3 text-[17px] leading-6 tracking-[-0.4px]">
            Редактировать
          </h2>

          {/* Form */}
          <section className="mt-[18px] mr-6 ml-[18px] h-[394px] border border-[#e6e4e5] bg-white px-5">
            <div className="mt-[15px] text-[12.500px] leading-5 font-bold tracking-[-0.7px]">Название</div>
            <div className="mt-[9px] h-[30px] w-[428px] border border-[#a3acaf] pl-[9px] leading-[26px]">Администратор</div>
            <CheckRow className="mt-5">Назначать при регистрации на сайте</CheckRow>
            <CheckRow className="mt-6">Видеть только свои материалы</CheckRow>

            <div className="mt-[18px] h-[129px] rounded border border-[#dcdcdc] px-1">
              <div className="flex h-[66px] gap-1.5 border-b border-[#dcdcdc] pt-3.5 pl-[19px] text-sm text-[#444]">
                <button className="h-[34px] w-[267px] rounded-[3px] border border-[#d2d2d2] tracking-[-0.32px]">
                  Права для административной части
                </button>
                <button className="h-[34px] w-[261px] rounded-[3px] border border-[#d2d2d2] bg-[#444] tracking-[-0.32px] text-white">
                  Права для пользовательской части
                </button>
              </div>
              <div className="flex h-[59px] items-center pl-[18px]">
                <span className="w-[100px] text-sm font-bold tracking-[-0.3px]">Форум</span>
                <Checkbox checked />
                <span className="ml-[9px] tracking-[-0.2px]">Модератор</span>
              </div>
            </div>

            <div className="mt-[13px] flex items-center text-[12.500px] leading-5 font-bold tracking-[-0.54px]">
              Сортировка: установить перед
              <Icon name="help" className="ml-2 text-[#879297]" />
            </div>
            <a href="#" className="mt-2 inline-block border-b border-dashed border-[#1b99d8] leading-5 text-[#1b99d8]">Администратор</a>
          </section>

          {/* Save bar */}
          <div className="mt-2.5 flex h-[46px] border border-b-0 border-[#e8e6e7] pl-[38px]">
            <div className="flex h-[42px] items-center">
              <Checkbox />
              <span className="ml-2 w-[207px] pt-px tracking-[-0.34px]">Продолжить редактирование</span>
              <Checkbox />
              <span className="ml-2 w-[111px] pt-px tracking-[-0.4px]">Добавить еще</span>
              <button className="h-[27px] w-[101px] rounded-[3px] bg-[#1b99d8] text-[12.500px] font-medium tracking-[-0.45px] text-white">
                Сохранить
              </button>
            </div>
            <Icon name="compress" className="mt-[5px] mr-[5px] ml-auto" />
          </div>

          <footer className="mt-auto mr-6 ml-[18px] flex h-[109px] justify-between border-t border-[#e8e6e7] pt-[34px] text-[11.500px] leading-[21px] text-[#555]">
            <div>
              <p className="tracking-[-0.12px]">© 2003-2016 www.diafan.ru</p>
              <p>DIAFAN.CMS версия 6.0</p>
            </div>
            <div className="tracking-[-0.45px]">
              Техническая поддержка<span className="mx-[7px]">|</span>Документация модуля
            </div>
          </footer>
        </main>
      </div>
    </div>
  );
}
